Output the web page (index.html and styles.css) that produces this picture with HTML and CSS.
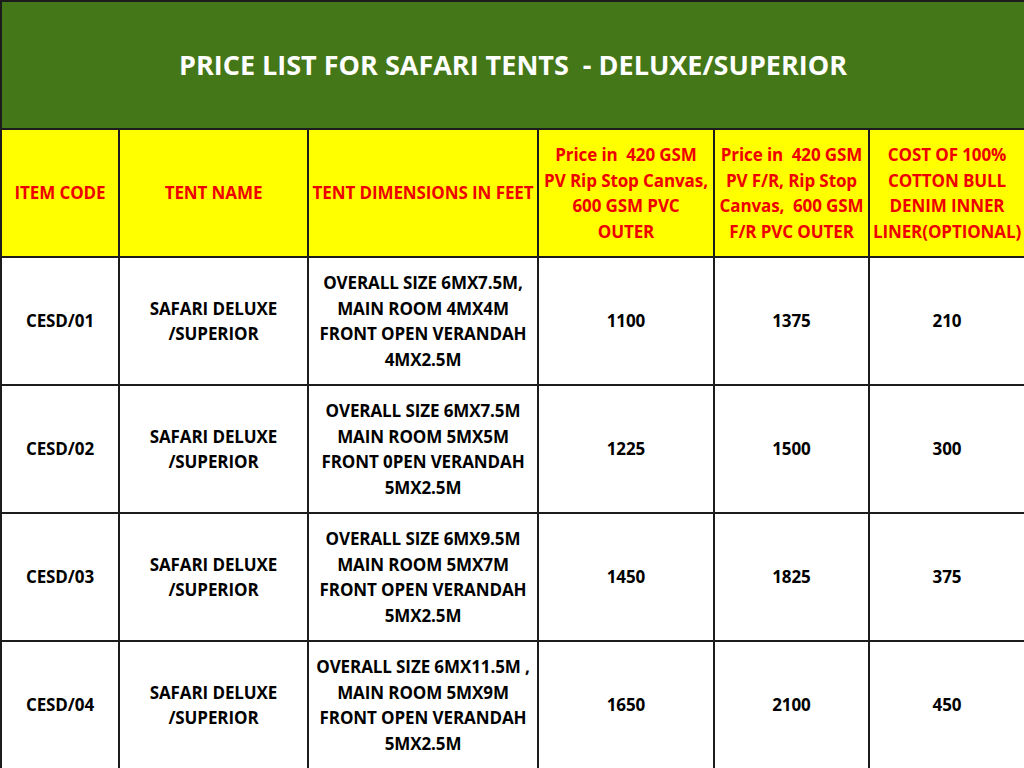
FILE: index.html
```html
<!DOCTYPE html>
<html>
<head>
<meta charset="utf-8">
<link rel="stylesheet" href="styles.css">
</head>
<body>
<table class="price">
  <colgroup>
    <col class="c1"><col class="c2"><col class="c3"><col class="c4"><col class="c5"><col class="c6">
  </colgroup>
  <tr class="title-row"><th colspan="6">PRICE LIST FOR SAFARI TENTS&nbsp; - DELUXE/SUPERIOR</th></tr>
  <tr class="head-row">
    <th>ITEM CODE</th>
    <th>TENT NAME</th>
    <th>TENT DIMENSIONS IN FEET</th>
    <th>Price in&nbsp; 420 GSM<br>PV Rip Stop Canvas,<br>600 GSM PVC<br>OUTER</th>
    <th>Price in&nbsp; 420 GSM<br>PV F/R, Rip Stop<br>Canvas,&nbsp; 600 GSM<br>F/R PVC OUTER</th>
    <th>COST OF 100%<br>COTTON BULL<br>DENIM INNER<br>LINER(OPTIONAL)</th>
  </tr>
  <tr class="data-row">
    <td>CESD/01</td>
    <td>SAFARI DELUXE<br>/SUPERIOR</td>
    <td>OVERALL SIZE 6MX7.5M,<br>MAIN ROOM 4MX4M<br>FRONT OPEN VERANDAH<br>4MX2.5M</td>
    <td>1100</td><td>1375</td><td>210</td>
  </tr>
  <tr class="data-row">
    <td>CESD/02</td>
    <td>SAFARI DELUXE<br>/SUPERIOR</td>
    <td>OVERALL SIZE 6MX7.5M<br>MAIN ROOM 5MX5M<br>FRONT 0PEN VERANDAH<br>5MX2.5M</td>
    <td>1225</td><td>1500</td><td>300</td>
  </tr>
  <tr class="data-row">
    <td>CESD/03</td>
    <td>SAFARI DELUXE<br>/SUPERIOR</td>
    <td>OVERALL SIZE 6MX9.5M<br>MAIN ROOM 5MX7M<br>FRONT OPEN VERANDAH<br>5MX2.5M</td>
    <td>1450</td><td>1825</td><td>375</td>
  </tr>
  <tr class="data-row">
    <td>CESD/04</td>
    <td>SAFARI DELUXE<br>/SUPERIOR</td>
    <td>OVERALL SIZE 6MX11.5M ,<br>MAIN ROOM 5MX9M<br>FRONT OPEN VERANDAH<br>5MX2.5M</td>
    <td>1650</td><td>2100</td><td>450</td>
  </tr>
</table>
</body>
</html>
```
FILE: styles.css
```css
html, body {
  margin: 0;
  padding: 0;
  background: #ffffff;
}
.price {
  width: 1024px;
  border-collapse: collapse;
  table-layout: fixed;
  font-family: "Open Sans", "Liberation Sans", sans-serif;
  font-weight: 700;
}
.c1 { width: 118px; }
.c2 { width: 189px; }
.c3 { width: 230px; }
.c4 { width: 176px; }
.c5 { width: 155px; }
.c6 { width: 156px; }
.price th, .price td {
  border: 2px solid #1c1c1c;
  text-align: center;
  vertical-align: middle;
  padding: 0;
  font-size: 17px;
  line-height: 25.5px;
  letter-spacing: -0.1px;
  white-space: nowrap;
  overflow: hidden;
}
.title-row th {
  background: #447717;
  color: #ffffff;
  font-size: 27px;
  height: 126px;
  letter-spacing: 0;
  line-height: 30px;
}
.head-row th {
  background: #ffff00;
  color: #ee0000;
  height: 126px;
}
.data-row td {
  color: #000000;
  height: 126px;
}
```
